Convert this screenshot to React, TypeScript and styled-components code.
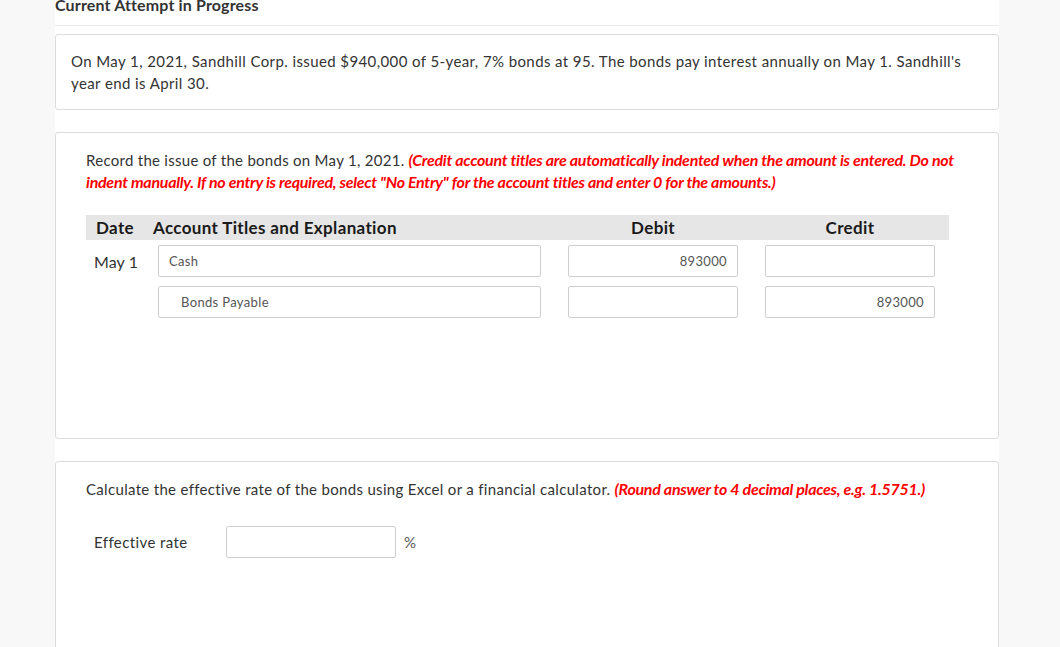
import React from "react";
import styled, { createGlobalStyle } from "styled-components";

const Global = createGlobalStyle`
  html, body { margin: 0; padding: 0; background: #f8f8f8; }
  body { font-family: Lato, "Noto Sans", sans-serif; color: #333; overflow: hidden; }
  * { box-sizing: border-box; }
`;

const Page = styled.div`
  margin-left: 55px;
  width: 944px;
  min-height: 647px;
  background: #fff;
  display: flex;
  flex-direction: column;
`;

const Heading = styled.h2`
  margin: -5px 0 0 0;
  height: 31px;
  font-size: 16px;
  line-height: 20px;
  font-weight: 700;
  letter-spacing: 0.15px;
  color: #333;
  border-bottom: 1px solid #eaeaea;
  padding: 0;
`;

const Card = styled.section<{ $pad: number; $top: number; $height?: number; $gapTop: number }>`
  margin-top: ${(p) => p.$gapTop}px;
  border: 1px solid #dcdcdc;
  border-radius: 3px;
  padding: ${(p) => p.$top}px ${(p) => p.$pad}px ${(p) => p.$pad}px;
  ${(p) => (p.$height ? `height: ${p.$height}px;` : "")}
  background: #fff;
`;

const Para = styled.p<{ $spacing?: number }>`
  margin: 0;
  font-size: 15px;
  line-height: 22px;
  letter-spacing: ${(p) => p.$spacing ?? 0.28}px;
  color: #333;
`;

const Note = styled.span`
  color: #ff0000;
  font-style: italic;
  font-weight: 700;
  font-size: 16px;
  letter-spacing: -0.28px;
`;

const Grid = styled.div`
  display: grid;
  width: 863px;
  grid-template-columns: 45px 383px 170px 170px;
  column-gap: 27px;
  padding-right: 14px;
  align-items: center;
`;

const HeaderRow = styled(Grid)`
  margin-top: 22px;
  background: #e6e6e6;
  height: 25px;
`;

const HeadCell = styled.div<{ $align?: string; $shift?: number }>`
  font-size: 17px;
  font-weight: 700;
  letter-spacing: 0.35px;
  color: #1a1a1a;
  white-space: nowrap;
  text-align: ${(p) => p.$align || "left"};
  margin-left: ${(p) => p.$shift || 0}px;
`;

const BodyRow = styled(Grid)<{ $top: number }>`
  margin-top: ${(p) => p.$top}px;
`;

const DateCell = styled.div`
  font-size: 16px;
  letter-spacing: 0.1px;
  color: #333;
  padding-left: 8px;
  white-space: nowrap;
`;

const Field = styled.div<{ $align?: string; $indent?: number }>`
  height: 32px;
  border: 1px solid #cfcfcf;
  border-radius: 2px;
  background: #fff;
  display: flex;
  align-items: center;
  justify-content: ${(p) => (p.$align === "right" ? "flex-end" : "flex-start")};
  padding: 0 10px 0 ${(p) => p.$indent ?? 10}px;
  font-size: 13px;
  letter-spacing: 0.35px;
  color: #555;
`;

const RateRow = styled.div`
  display: flex;
  align-items: center;
  margin-top: 26px;
  padding-left: 8px;
`;

const RateLabel = styled.div`
  width: 132px;
  font-size: 15px;
  letter-spacing: 0.4px;
  color: #333;
`;

const RateInput = styled(Field)`
  width: 170px;
`;

const Unit = styled.span`
  margin-left: 8px;
  font-size: 15px;
  color: #555;
`;

export default function App() {
  return (
    <>
      <Global />
      <Page>
        <Heading>Current Attempt in Progress</Heading>
        <Card $pad={15} $top={15} $gapTop={8}>
          <Para $spacing={0.4}>
            On May 1, 2021, Sandhill Corp. issued $940,000 of 5-year, 7% bonds at 95. The bonds pay interest annually on May 1. Sandhill's year end is April 30.
          </Para>
        </Card>
        <Card $pad={30} $top={16} $gapTop={22} $height={307}>
          <Para>
            Record the issue of the bonds on May 1, 2021.{" "}
            <Note>
              (Credit account titles are automatically indented when the amount is entered. Do not indent manually. If no entry is required, select "No Entry" for the account titles and enter 0 for the amounts.)
            </Note>
          </Para>
          <HeaderRow>
            <HeadCell $shift={10}>Date</HeadCell>
            <HeadCell $shift={-5}>Account Titles and Explanation</HeadCell>
            <HeadCell $align="center">Debit</HeadCell>
            <HeadCell $align="center">Credit</HeadCell>
          </HeaderRow>
          <BodyRow $top={5}>
            <DateCell>May 1</DateCell>
            <Field $indent={10}>Cash</Field>
            <Field $align="right">893000</Field>
            <Field $align="right"></Field>
          </BodyRow>
          <BodyRow $top={9}>
            <DateCell></DateCell>
            <Field $indent={22}>Bonds Payable</Field>
            <Field $align="right"></Field>
            <Field $align="right">893000</Field>
          </BodyRow>
        </Card>
        <Card $pad={30} $top={16} $gapTop={22} $height={220}>
          <Para $spacing={0.32}>
            Calculate the effective rate of the bonds using Excel or a financial calculator.{" "}
            <Note>(Round answer to 4 decimal places, e.g. 1.5751.)</Note>
          </Para>
          <RateRow>
            <RateLabel>Effective rate</RateLabel>
            <RateInput></RateInput>
            <Unit>%</Unit>
          </RateRow>
        </Card>
      </Page>
    </>
  );
}
